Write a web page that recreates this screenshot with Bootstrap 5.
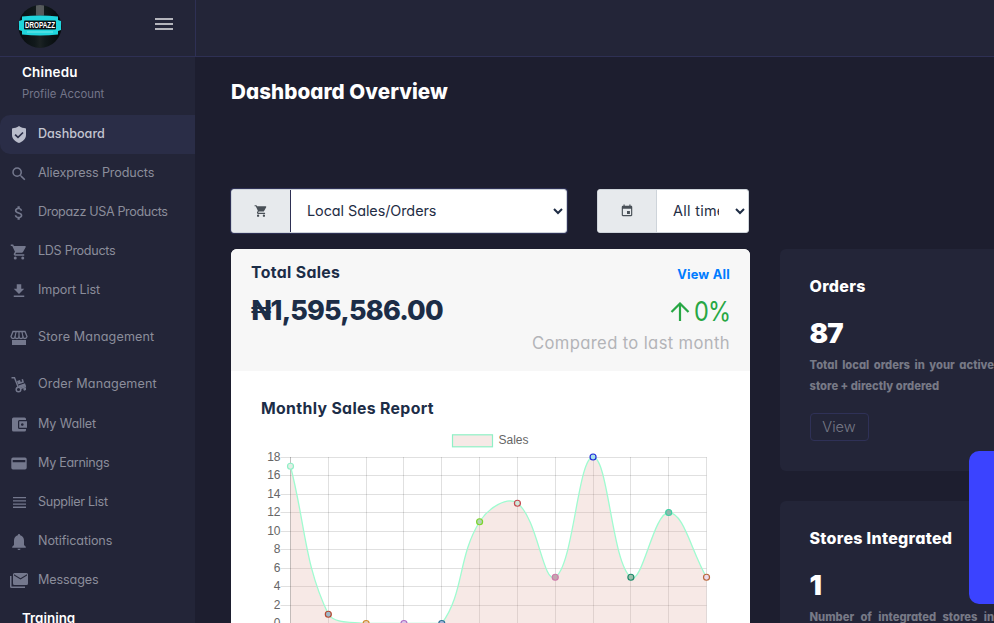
<!DOCTYPE html>
<html lang="en">
<head>
<meta charset="utf-8">
<meta name="viewport" content="width=device-width, initial-scale=1">
<title>Dashboard Overview</title>
<link href="https://cdn.jsdelivr.net/npm/bootstrap@5.3.0/dist/css/bootstrap.min.css" rel="stylesheet">
<style>
body{font-family:"Inter","Open Sans",sans-serif;font-feature-settings:"cv11";background:#1d1e2f;color:#fff;height:100vh}
.brand-cell{width:196px;height:57px;border-right:1px solid #2e3054;border-bottom:1px solid #2e3054;padding:5px 22px 0 18px}
.burger{margin-top:13px}
.topbar{height:57px;background:#232538;border-bottom:1px solid #2e3054}
.sidebar{width:195px;background:#232538;height:566px}
.user-name{font-size:13.4px;font-weight:600;line-height:20px;padding:5px 0 0 22px;letter-spacing:.2px}
.user-name.lower{padding-top:8px;letter-spacing:0}
.user-sub{font-size:11.3px;line-height:18px;color:#74768a;padding:3px 0 0 22px;letter-spacing:.02px}
.menu{margin-top:12px}
.menu a{height:39px;padding-left:10px;color:#8b8d9b;font-size:12.6px;text-decoration:none;white-space:nowrap}
.menu a svg{width:18px;height:18px;margin:1px 10px 0 0;fill:#74788d;flex:none}
.menu a.current{background:#2a2d47;color:#c3c5d0;font-weight:500;border-radius:10px 0 0 10px}
.menu a.current svg{fill:#b9bccb}
.menu .tall{height:55px}
.menu .tall2{height:39px}
.menu .tall2+a{height:40px}
.tight{letter-spacing:-.3px}
.tighter{letter-spacing:-.36px}
.snug{letter-spacing:-.11px}
.loose{letter-spacing:.13px}
.page{padding-left:36px;gap:30px}
h1.title{font-size:20.6px;font-weight:800;line-height:28px;margin:21px 0 83px;letter-spacing:.07px}
.filters{width:518px}
.picker{height:44px;border:1px solid #ced4da;border-radius:3px;overflow:hidden;background:#fff;color:#1f2d45}
.picker-main{width:336px;box-shadow:0 0 0 1px #2e3054}
.picker-main .tag{border-right-color:#2e3054!important}
.picker-time{width:152px}
.picker .tag{width:59px;background:#e7eaed;border-right:1px solid #ced4da}
.picker .tag svg{width:14px;height:14px;fill:#495057}
.picker .value{font-size:14.4px;padding-left:16px;white-space:nowrap;letter-spacing:-.06px}
.picker .value svg{margin-right:-1px}
.clip{overflow:hidden;width:46px;letter-spacing:.3px}
.left-col{width:519px}
.sales{background:#fff;border-radius:6px 6px 0 0;color:#1c2d47;height:374px;margin-top:16px;overflow:hidden}
.sales-head{background:#f7f7f7;height:122px;padding:12px 20px 0}
.h-card{font-size:15.8px;font-weight:700;line-height:24px;letter-spacing:.35px}
.amount{font-size:27px;font-weight:800;line-height:36px;margin-top:8px;letter-spacing:-.8px}
.viewall{font-size:12.8px;font-weight:700;line-height:22px;color:#007bff;text-decoration:none;margin-top:3px;letter-spacing:.25px}
.percent{font-size:27px;line-height:36px;color:#28a745;margin-top:8px}
.percent span{display:inline-block;width:36px;letter-spacing:-1px}
.percent .glyphs{transform:scaleX(.87);transform-origin:left}
.compare{font-size:16.6px;line-height:24px;color:#b3b4b8;letter-spacing:.37px;white-space:nowrap;margin-top:1px}
.report{padding:26px 0 0 30px}
.right-col{width:244px;padding-top:192px}
.stat{background:#232538;border-radius:6px;height:222px;padding:26px 30px 0 29.5px;margin-bottom:30px}
.stat h2{font-size:16px;font-weight:800;line-height:22px;margin:0;letter-spacing:.3px;white-space:nowrap}
.stat .num{font-size:27.5px;font-weight:900;line-height:36px;margin:18px 0 4px;letter-spacing:-1px}
.stat p{font-size:11.2px;font-weight:850;line-height:21px;color:#777986;text-align:justify;margin:0 0 16px}
.btn-view{border:1px solid #2f3157;color:#777986;font-size:14.6px;font-weight:300;line-height:26px;width:59px;padding:0;border-radius:4px}
.side-tab{width:25px;height:153px;top:451px;background:#3b43ff;border-radius:10px 0 0 10px}
.plot text{font-family:"Liberation Sans",Arial,sans-serif;font-size:12px;fill:#666}
</style>
<script src="https://cdn.jsdelivr.net/npm/bootstrap@5.3.0/dist/js/bootstrap.bundle.min.js"></script>
</head>
<body class="overflow-hidden">
<header class="topbar d-flex">
 <div class="brand-cell d-flex justify-content-between align-items-start">
  <svg width="44" height="44" viewBox="0 0 44 44" aria-label="Dropazz">
   <defs><linearGradient id="shine"><stop offset="0" stop-color="#070b0e"/><stop offset=".38" stop-color="#11191b"/><stop offset=".5" stop-color="#1b2223"/><stop offset=".62" stop-color="#11191b"/><stop offset="1" stop-color="#05080a"/></linearGradient></defs>
   <circle cx="22" cy="21.500" r="21.500" fill="url(#shine)"/>
   <path d="M18 .5q4-1 8 0v10h-8z" fill="#8b8d8e" opacity=".55"/>
   <path d="M4 11.500Q22 9.500 40 11.500V15l3 1v9l-3 1v3.500Q22 31.500 4 29.500V26l-3-1v-9l3-1z" fill="#20d5dc"/>
   <rect x="6" y="15.500" width="32" height="9" rx="1" fill="#081215"/>
   <path d="M9 27h26" stroke="#8fecec" stroke-width=".8"/>
   <text x="22" y="23" text-anchor="middle" textLength="30" lengthAdjust="spacingAndGlyphs" font-family="Liberation Sans" font-weight="700" font-size="8.500" fill="#fff">DROPAZZ</text>
  </svg>
  <svg width="18" height="12" viewBox="0 0 18 12" class="burger"><path d="M0 0h18v2H0zM0 5h18v2H0zM0 10h18v2H0z" fill="#b4b5bc"/></svg>
 </div>
</header>
<div class="d-flex">
 <aside class="sidebar flex-shrink-0 overflow-hidden">
  <div class="user-name">Chinedu</div>
  <div class="user-sub">Profile Account</div>
  <nav class="menu d-flex flex-column">
   <a href="#" class="d-flex align-items-center current"><svg viewBox="0 0 18 18"><path fill-rule="evenodd" d="M9 0C7 1.500 4.500 2 2 2.500V9c0 4 3.500 6.700 7 8 3.500-1.300 7-4 7-8V2.500C13.500 2 11 1.500 9 0zM5.700 8.100l2.300 2.200 4.400-4.400 1.200 1.100L8 12.500 4.500 9.200z"/></svg><span>Dashboard</span></a>
   <a href="#" class="d-flex align-items-center"><svg viewBox="0 0 24 24"><path d="M15.500 14h-.79l-.28-.27A6.470 6.470 0 0 0 16 9.500 6.500 6.500 0 1 0 9.500 16c1.610 0 3.090-.59 4.230-1.570l.27.28v.79l5 4.990L20.490 19l-4.990-5zm-6 0C7.010 14 5 11.990 5 9.500S7.010 5 9.500 5 14 7.010 14 9.500 11.990 14 9.500 14z"/></svg><span class="snug">Aliexpress Products</span></a>
   <a href="#" class="d-flex align-items-center"><svg viewBox="0 0 24 24"><path d="M11.800 10.900c-2.270-.59-3-1.200-3-2.150 0-1.090 1.010-1.850 2.700-1.850 1.780 0 2.440.85 2.500 2.100h2.210c-.07-1.720-1.120-3.300-3.210-3.810V3h-3v2.160c-1.940.42-3.500 1.680-3.500 3.610 0 2.310 1.910 3.460 4.700 4.130 2.500.6 3 1.480 3 2.410 0 .69-.49 1.790-2.700 1.790-2.060 0-2.870-.92-2.980-2.100h-2.200c.12 2.190 1.760 3.420 3.680 3.830V21h3v-2.150c1.950-.37 3.500-1.500 3.500-3.550 0-2.840-2.430-3.810-4.700-4.400z"/></svg><span class="tighter">Dropazz USA Products</span></a>
   <a href="#" class="d-flex align-items-center"><svg viewBox="0 0 24 24"><path id="cart" d="M17 18a2 2 0 1 1 0 4 2 2 0 0 1 0-4M1 2h3.270l.94 2H20a1 1 0 0 1 .88 1.500l-3.580 6.470A2 2 0 0 1 15.550 13H8.100l-.93 1.750a.25.25 0 0 0 .25.25H19v2H7a2 2 0 0 1-1.760-2.960l1.360-2.450L3 4H1V2m6 16a2 2 0 1 1 0 4 2 2 0 0 1 0-4z"/></svg><span class="tight">LDS Products</span></a>
   <a href="#" class="d-flex align-items-center"><svg viewBox="0 0 24 24"><path d="M19 9h-4V3H9v6H5l7 7 7-7zM5 18v2h14v-2H5z"/></svg><span class="snug">Import List</span></a>
   <a href="#" class="d-flex align-items-center tall"><svg viewBox="0 0 18 18"><path d="M3 2.500h12L17 7.500q-.5 2-2 2t-2-1.300q-.5 1.300-2 1.300T9 8.200q-.5 1.300-2 1.300T5 8.200Q4.500 9.500 3 9.500T1 7.500z" fill="none" stroke="#74788d" stroke-width="1.300"/><path d="M6 3L5 8M9 3v5M12 3l1 5" stroke="#74788d" stroke-width="1.200"/><path d="M2 11h14v5H2z"/></svg><span class="loose">Store Management</span></a>
   <a href="#" class="d-flex align-items-center tall2"><svg viewBox="0 0 18 18"><path d="M1.500 1.700h3l3.700 9.500M10.500 12.500l5.500-2" fill="none" stroke="#74788d" stroke-width="1.400"/><circle cx="8.500" cy="13.500" r="2.300" fill="none" stroke="#74788d" stroke-width="1.500"/><path d="M7 5l3-1 .7 2 1.500-.5-.7-2L13 3l1 3.500-6 2zM8.500 9.500l6.500-2.300 1 2.800-5 1.800q-.8-1-2-.9zM13 12.500l3-1v2.500l-2 .8z"/></svg><span class="loose">Order Management</span></a>
   <a href="#" class="d-flex align-items-center"><svg viewBox="0 0 18 18"><path fill-rule="evenodd" d="M3.500 1.500h11q1.500 0 1.500 1.500v1H9.500Q8 4 8 5.500v6Q8 13 9.500 13H16v1q0 1.500-1.500 1.500h-11Q2 15.500 2 14V3q0-1.500 1.500-1.500zM9.200 5.200H17v6.600H9.200zM12.300 7.200a1.300 1.300 0 1 0 .01 0z"/></svg><span class="snug">My Wallet</span></a>
   <a href="#" class="d-flex align-items-center"><svg viewBox="0 0 18 18"><path fill-rule="evenodd" d="M3 2.500h12q1.700 0 1.700 1.700v8.600q0 1.700-1.700 1.700H3q-1.700 0-1.700-1.700V4.200Q1.300 2.500 3 2.500zM2.700 5v2.300h12.600V5z"/></svg><span class="tight">My Earnings</span></a>
   <a href="#" class="d-flex align-items-center"><svg viewBox="0 0 18 18"><path d="M3 3h13v1.300H3zM3 6.200h13v1.300H3zM3 9.400h13v1.300H3zM3 12.600h13v1.300H3z"/></svg><span class="tight">Supplier List</span></a>
   <a href="#" class="d-flex align-items-center"><svg viewBox="0 0 18 18"><path d="M9 17q1.500 0 1.500-1.200h-3Q7.500 17 9 17zM14 12V7.500q0-4-3.800-5.200Q10.200 1 9 1T7.800 2.300Q4 3.500 4 7.500V12l-1.800 1.800v.9h13.600v-.9z"/></svg><span class="snug">Notifications</span></a>
   <a href="#" class="d-flex align-items-center"><svg viewBox="0 0 18 18"><path fill-rule="evenodd" d="M4.500 1H16.500Q18 1 18 2.500v9q0 1.500-1.500 1.500H4.500Q3 13 3 11.500v-9Q3 1 4.500 1zM4 2.300v1.200l6.500 4 6.500-4V2.300l-6.500 4zM0 4h1.500v10.500H15V16H1.500Q0 16 0 14.500z"/></svg><span class="snug">Messages</span></a>
  </nav>
  <div class="user-name lower">Training</div>
 </aside>
 <main class="page d-flex">
  <section class="left-col flex-shrink-0">
   <h1 class="title">Dashboard Overview</h1>
   <div class="filters d-flex justify-content-between">
    <div class="picker picker-main d-flex">
     <span class="tag d-flex align-items-center justify-content-center"><svg viewBox="0 0 24 24"><use href="#cart"/></svg></span>
     <span class="value d-flex align-items-center justify-content-between flex-grow-1 pe-1"><span>Local Sales/Orders</span><svg width="10" height="7" viewBox="0 0 10 7"><path d="M1 1l4 4 4-4" fill="none" stroke="#1f2d45" stroke-width="2"/></svg></span>
    </div>
    <div class="picker picker-time d-flex">
     <span class="tag d-flex align-items-center justify-content-center"><svg viewBox="0 0 24 24"><path d="M17 12h-5v5h5v-5zM16 1v2H8V1H6v2H5a2 2 0 0 0-2 2v14c0 1.100.89 2 2 2h14c1.100 0 2-.9 2-2V5c0-1.100-.9-2-2-2h-1V1h-2zm3 18H5V8h14v11z"/></svg></span>
     <span class="value d-flex align-items-center justify-content-between flex-grow-1 pe-1"><span class="clip">All time</span><svg width="10" height="7" viewBox="0 0 10 7"><path d="M1 1l4 4 4-4" fill="none" stroke="#1f2d45" stroke-width="2"/></svg></span>
    </div>
   </div>
   <div class="sales">
    <div class="sales-head d-flex justify-content-between">
     <div><div class="h-card">Total Sales</div><div class="amount">₦1,595,586.00</div></div>
     <div class="d-flex flex-column align-items-end">
      <a class="viewall" href="#">View All</a>
      <div class="percent d-flex align-items-center"><svg width="20" height="20" viewBox="0 0 20 20" class="me-1"><path d="M10 19V2M1.500 10L10 1.500l8.500 8.500" fill="none" stroke="#28a745" stroke-width="2.200"/></svg><span class="glyphs">0%</span></div>
      <div class="compare">Compared to last month</div>
     </div>
    </div>
    <div class="report h-card">Monthly Sales Report</div>
    <svg id="plot" class="plot d-block" width="519" height="203" viewBox="231 421 519 203"></svg>
   </div>
  </section>
  <section class="right-col flex-shrink-0">
   <div class="stat">
    <h2>Orders</h2>
    <div class="num">87</div>
    <p>Total local orders in your active store + directly ordered</p>
    <a href="#" class="btn btn-view">View</a>
   </div>
   <div class="stat">
    <h2>Stores Integrated</h2>
    <div class="num">1</div>
    <p>Number of integrated stores in your account</p>
   </div>
  </section>
 </main>
</div>
<div class="side-tab position-fixed end-0"></div>
<script>
const values = [17,1,0,0,0,11,13,5,18,5,12,5];
const rings = ['#8ff0c6','#b5482f','#d08a2c','#b06fc4','#2b6f94','#7bd52c','#c44a50','#cf7bab','#1d2bd8','#1f8a6b','#3fcfa2','#b8683c'];
const fills = ['#e3eee6','#9fb9c9','#e5cdb9','#d9c6ea','#a9b5dc','#b3d3b4','#cfe6d9','#c2a7b0','#a9e2ea','#9cc0ac','#8fb7ac','#ecd9ea'];
const px = i => 290.5 + 37.82*i, py = v => 623.5 - 9.25*v;
const pts = values.map((v,i)=>[px(i),py(v)]);
const cap = y => Math.max(457, Math.min(623.5, y));
// Control points for a smoothed line with tension 0.4
const ctl = pts.map((c,i)=>{
  const p = pts[i-1]||c, n = pts[i+1]||c;
  const a = Math.hypot(c[0]-p[0],c[1]-p[1]), b = Math.hypot(n[0]-c[0],n[1]-c[1]);
  const fa = .4*a/(a+b), fb = .4*b/(a+b);
  return [c[0]-fa*(n[0]-p[0]), cap(c[1]-fa*(n[1]-p[1])), c[0]+fb*(n[0]-p[0]), cap(c[1]+fb*(n[1]-p[1]))];
});
let line = 'M'+pts[0];
for(let i=1;i<pts.length;i++) line += `C${ctl[i-1][2]},${ctl[i-1][3]} ${ctl[i][0]},${ctl[i][1]} ${pts[i]}`;
let s = '';
for(let v=0;v<=18;v+=2){const y=Math.floor(py(v))+.5; s+=`<path d="M280.500 ${y}H706.500" stroke="#000" stroke-opacity=".12"/><text x="280.500" y="${y+3}" text-anchor="end">${v}</text>`;}
for(let i=0;i<12;i++){s+=`<path d="M${Math.floor(px(i))+.5} 457V633" stroke="#000" stroke-opacity="${i?.12:.25}"/>`;}
s+=`<path d="${line}V623.500H290.500Z" fill="#e0a79c" fill-opacity=".25"/><path d="${line}" fill="none" stroke="#9ffbd0" stroke-width="1.300"/>`;
pts.forEach((p,i)=>s+=`<circle cx="${p[0]}" cy="${p[1]}" r="3" fill="${fills[i]}" stroke="${rings[i]}" stroke-width="1.200"/>`);
s+='<rect x="452.500" y="434.800" width="40" height="12" fill="#f6e9e6" stroke="#8ff0c6" stroke-width="1.200"/><text x="498.500" y="444">Sales</text>';
document.getElementById('plot').innerHTML = s;
</script>
</body>
</html>
